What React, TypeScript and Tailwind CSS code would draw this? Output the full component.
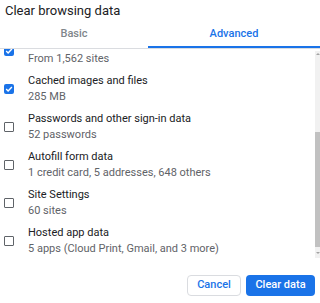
import React from 'react';

interface DataItem {
  label: string;
  detail: string;
  checked: boolean;
}

// list is scrolled: the first row's label sits above the visible area
const items: DataItem[] = [
  { label: '', detail: 'From 1,562 sites', checked: true },
  { label: 'Cached images and files', detail: '285 MB', checked: true },
  { label: 'Passwords and other sign-in data', detail: '52 passwords', checked: false },
  { label: 'Autofill form data', detail: '1 credit card, 5 addresses, 648 others', checked: false },
  { label: 'Site Settings', detail: '60 sites', checked: false },
  { label: 'Hosted app data', detail: '5 apps (Cloud Print, Gmail, and 3 more)', checked: false },
];

function Checkbox({ checked }: { checked: boolean }) {
  if (checked) {
    return (
      <div className="w-[10px] h-[10px] rounded-[2px] bg-[#1a73e8] flex items-center justify-center shrink-0">
        <svg width="8" height="8" viewBox="0 0 8 8" fill="none">
          <path d="M1.2 4.1 L3.1 6 L6.9 1.9" stroke="white" strokeWidth="1.4" />
        </svg>
      </div>
    );
  }
  return <div className="w-[10px] h-[10px] rounded-[1px] border-[1.5px] border-[#5f6368] shrink-0" />;
}

export default function App() {
  return (
    <div className="w-[320px] h-[303px] bg-white overflow-hidden font-['Roboto',sans-serif] text-[#202124]">
      {/* Title */}
      <div className="h-[22px] pl-[5px] flex items-center text-[13px]">Clear browsing data</div>

      {/* Tabs */}
      <div className="h-[27px] flex border-b border-[#dadce0]">
        <div className="w-[148px] flex items-center justify-center text-[11px] font-medium text-[#80868b] pb-[2px]">
          Basic
        </div>
        <div className="flex-1 flex items-center justify-center text-[11px] font-medium text-[#1a73e8] border-b-2 border-[#1a73e8]">
          Advanced
        </div>
      </div>

      {/* List + scrollbar */}
      <div className="h-[209px] flex">
        <div className="flex-1 overflow-hidden">
          <div className="-mt-[17px]">
            {items.map((item, i) => (
              <div key={i} className="h-[38px] flex items-center pl-[4px] gap-[14px]">
                <Checkbox checked={item.checked} />
                <div className="flex flex-col pt-[2px]">
                  <span className="text-[11px] leading-[14px] h-[14px]">{item.label}</span>
                  <span className="text-[11px] leading-[18px] text-[#5f6368]">{item.detail}</span>
                </div>
              </div>
            ))}
          </div>
        </div>
        <div className="w-[5px] mt-[2px] bg-[#f1f1f1] flex flex-col">
          <div className="h-[8px] flex items-start justify-center pt-[2px]">
            <div className="w-0 h-0 border-l-[2px] border-r-[2px] border-b-[2px] border-l-transparent border-r-transparent border-b-[#a3a3a3]" />
          </div>
          <div className="h-[73px]" />
          <div className="h-[115px] bg-[#c1c1c1]" />
          <div className="flex-1 flex items-center justify-center">
            <div className="w-0 h-0 border-l-[2px] border-r-[2px] border-t-[2px] border-l-transparent border-r-transparent border-t-[#a3a3a3]" />
          </div>
        </div>
      </div>

      {/* Footer */}
      <div className="flex justify-end gap-[5px] pt-[17px] pr-[5px]">
        <button className="w-[54px] h-[21px] rounded-[4px] border border-[#dadce0] bg-white text-[11px] font-medium text-[#1a73e8]">
          Cancel
        </button>
        <button className="w-[69px] h-[21px] rounded-[4px] bg-[#1a73e8] text-[11px] font-medium text-white">
          Clear data
        </button>
      </div>
    </div>
  );
}
